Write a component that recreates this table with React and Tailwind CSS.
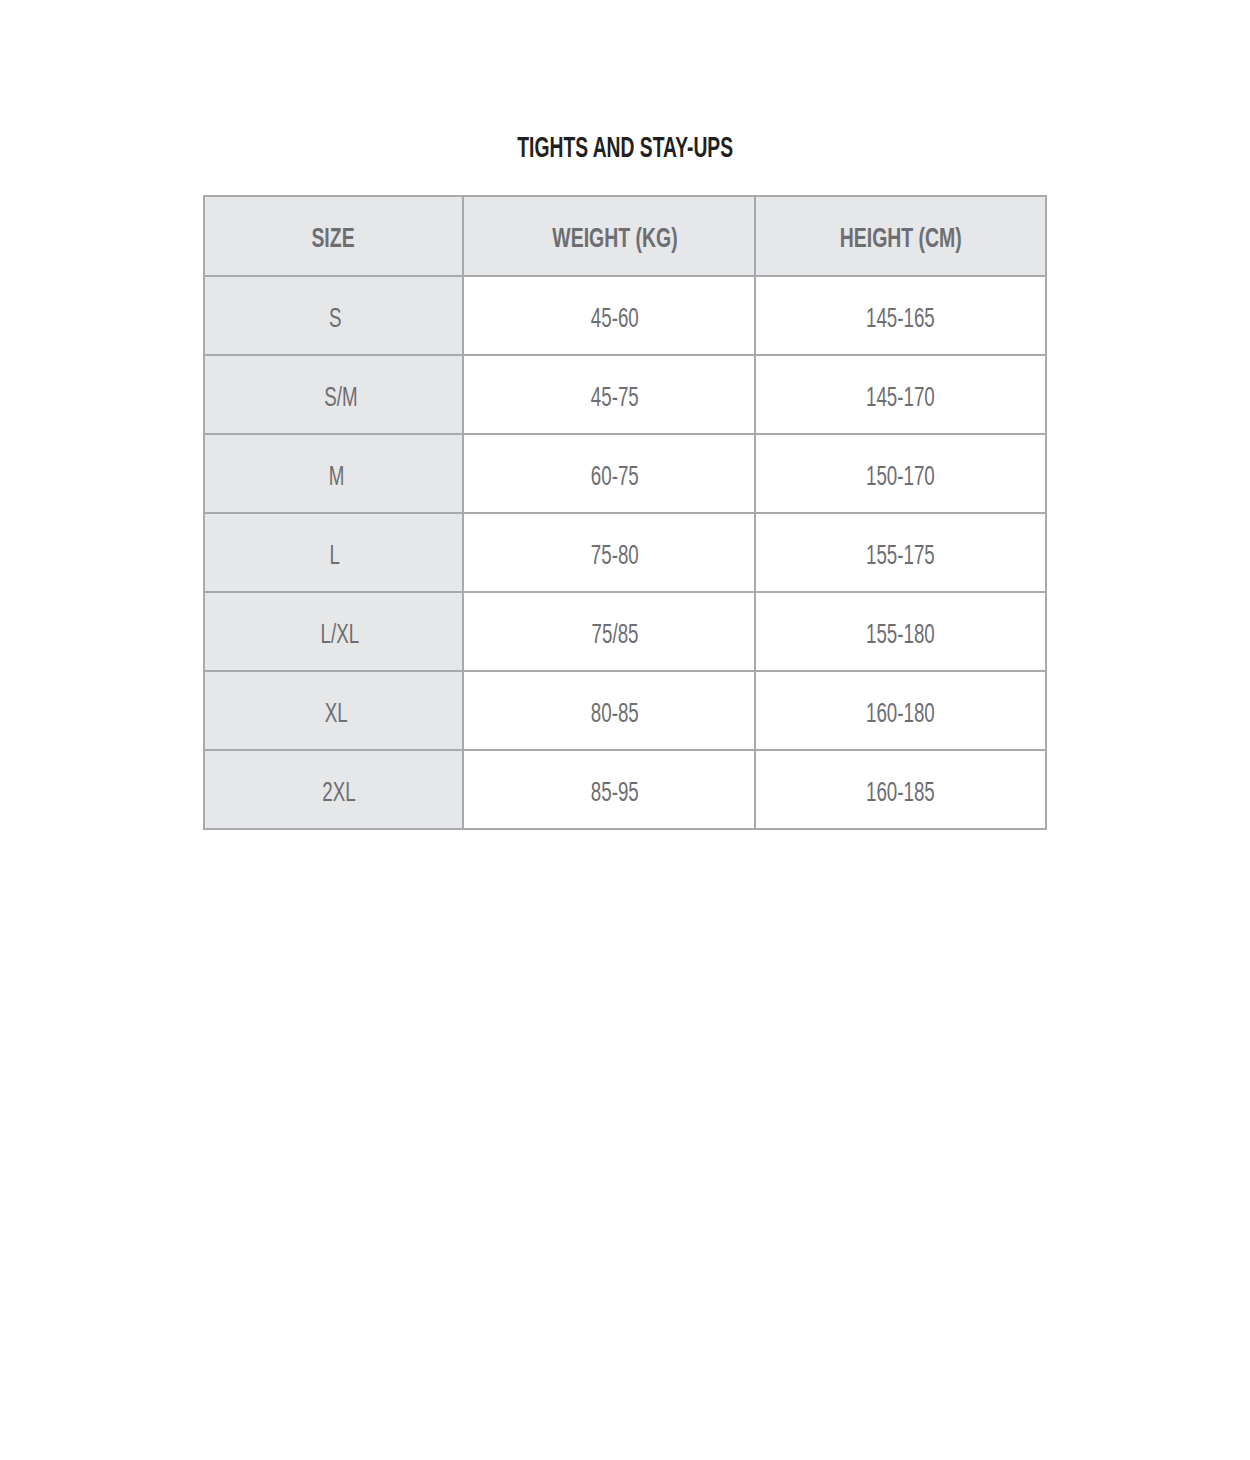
const rows = [
  ["S", "45-60", "145-165", 2],
  ["S/M", "45-75", "145-170", 7],
  ["M", "60-75", "150-170", 3],
  ["L", "75-80", "155-175", 1],
  ["L/XL", "75/85", "155-180", 6],
  ["XL", "80-85", "160-180", 3],
  ["2XL", "85-95", "160-185", 5],
];

function Cell({ children, head, gray, dx = 0 }) {
  return (
    <div
      className={`flex items-center justify-center ${head ? "h-[78px] pt-[5px]" : "h-[77px] pt-[5px]"} ${gray ? "bg-[#e6e7e8]" : "bg-white"}`}
      style={dx ? { paddingLeft: dx * 2 } : undefined}
    >
      <span
        className={`inline-block whitespace-nowrap text-[#6d6e71] ${head ? "scale-x-[0.72] text-[27px] font-bold" : "scale-x-[0.67] text-[28px]"} leading-none`}
      >
        {children}
      </span>
    </div>
  );
}

export default function App() {
  return (
    <div className="min-h-[1460px] w-[1250px] bg-white font-['Liberation_Sans',Arial,sans-serif]">
      <div className="flex justify-center pt-[133px]">
        <h1 className="inline-block h-[29px] scale-x-[0.665] whitespace-nowrap text-[29px] font-bold leading-[29px] text-[#231f20]">
          TIGHTS AND STAY-UPS
        </h1>
      </div>
      <div className="ml-[203px] mt-[33px] grid w-[844px] grid-cols-[257px_290px_289px] gap-[2px] bg-[#a7a9ac] p-[2px]">
        <Cell head gray>SIZE</Cell>
        <Cell head gray dx={6}>WEIGHT (KG)</Cell>
        <Cell head gray>HEIGHT (CM)</Cell>
        {rows.map((r) => (
          <div key={r[0]} className="contents">
            <Cell gray dx={r[3]}>{r[0]}</Cell>
            <Cell dx={6}>{r[1]}</Cell>
            <Cell>{r[2]}</Cell>
          </div>
        ))}
      </div>
    </div>
  );
}
